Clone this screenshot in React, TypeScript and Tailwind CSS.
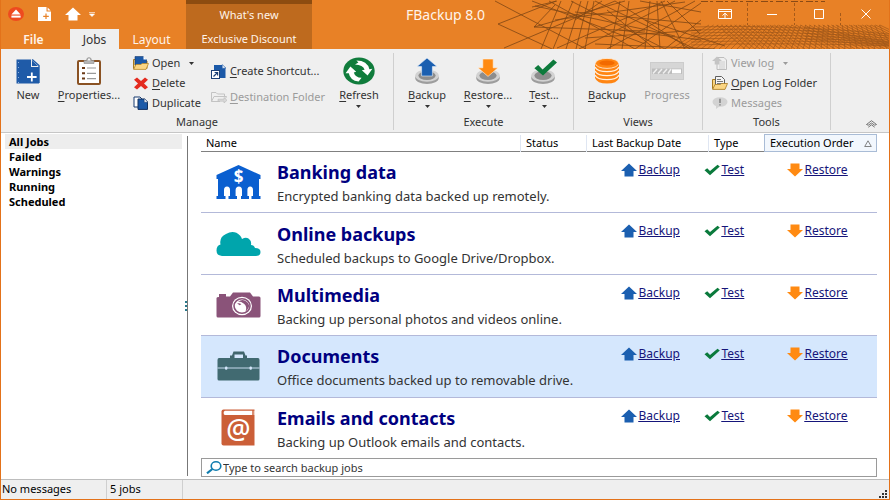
import type { ReactNode } from "react"

type IconProps = { className?: string }

/* ---------- small icons ---------- */

function EjectIcon() {
  return (
    <svg viewBox="0 0 16 14" className="h-3.5 w-4">
      <ellipse cx="8" cy="7" rx="8" ry="7" fill="#ee4a1f" />
      <path d="M8 2.5 12.6 7.4H3.4Z" fill="#fff" />
      <rect x="3.4" y="8.6" width="9.2" height="2" fill="#fff" />
    </svg>
  )
}

function NewFileSmallIcon() {
  return (
    <svg viewBox="0 0 13 14" className="h-3.5 w-[13px]">
      <path d="M0 0H8.5V4.5H13V14H0Z" fill="#fff" />
      <path d="M9.6 0.4 12.6 3.4H9.6Z" fill="#fff" />
      <path d="M8 6.5V12M5.2 9.3H10.8" stroke="#e88126" strokeWidth="1.2" />
    </svg>
  )
}

function UpArrowIcon({ className }: IconProps) {
  return (
    <svg viewBox="0 0 16 14" className={className}>
      <path d="M8 0.5 16 8H12.5V13.5H3.5V8H0Z" fill="currentColor" />
    </svg>
  )
}

function DownArrowIcon({ className }: IconProps) {
  return (
    <svg viewBox="0 0 16 14" className={className}>
      <path d="M8 13.5 16 6H12.5V0.5H3.5V6H0Z" fill="currentColor" />
    </svg>
  )
}

function CheckIcon({ className }: IconProps) {
  return (
    <svg viewBox="0 0 16 12" className={className}>
      <path d="M0.5 6.2 3.2 4.2 6 7 13.5 0.8 15.8 2.6 6 11.2Z" fill="#0a7a3c" />
    </svg>
  )
}

function Caret({ className }: IconProps) {
  return (
    <svg viewBox="0 0 5 3" className={`h-[3px] w-[5px] ${className ?? ""}`}>
      <path d="M0 0H5L2.5 3Z" fill="currentColor" />
    </svg>
  )
}

function OpenIcon() {
  return (
    <svg viewBox="0 0 16 14" className="h-3.5 w-4">
      <path d="M0.5 12.5V3.5H4L5 5H14V12.5Z" fill="#f7d483" stroke="#a87a1f" />
      <path d="M2 0.5H10.5L13.5 3.5V9H2Z" fill="#1b59a8" stroke="#173a70" strokeWidth="0.6" />
      <path d="M10.5 0V3.5H14Z" fill="#fff" />
      <path d="M0.6 13.4 3 8.5H8L9 7.5H15.5L13 13.4Z" fill="#fbd684" stroke="#b98a2b" strokeWidth="0.8" />
    </svg>
  )
}

function DeleteIcon() {
  return (
    <svg viewBox="0 0 16 13" className="h-[13px] w-4">
      <path d="M4 0.5 8 4 12 0.5 15 2.8 11 6.4 15 10.2 12 12.5 8 9 4 12.5 1 10.2 5 6.4 1 2.8Z" fill="#e42b1f" />
    </svg>
  )
}

function DuplicateIcon() {
  return (
    <svg viewBox="0 0 16 14" className="h-3.5 w-4">
      <path d="M1 1H7L9 3V11H1Z" fill="#fff" stroke="#173a70" />
      <path d="M5 3H11.5L14.5 6V13.4H5Z" fill="#1b59a8" stroke="#12305e" />
      <path d="M11.2 2.5V6.2H15Z" fill="#fff" stroke="#12305e" strokeWidth="0.5" />
    </svg>
  )
}

function ShortcutIcon() {
  return (
    <svg viewBox="0 0 16 15" className="h-[15px] w-4">
      <path d="M3 1H11.5L14.5 4V14H3Z" fill="#1b59a8" />
      <path d="M11.2 0.6V4.2H15Z" fill="#fff" stroke="#1b59a8" strokeWidth="0.6" />
      <rect x="0.5" y="6.5" width="8" height="8" fill="#fff" stroke="#1c3f75" />
      <path d="M2.5 12.5 6.3 8.8M3.6 8.5H6.6V11.5" fill="none" stroke="#1c3f75" strokeWidth="1.2" />
    </svg>
  )
}

function DestinationIcon() {
  return (
    <svg viewBox="0 0 16 12" className="h-3 w-4">
      <path d="M0.5 10.5V1.5H5L6.5 3H13.5V5M0.5 10.5 3 5.5H15.5L14.6 7.5M0.5 10.5H9" fill="none" stroke="#c3c3c3" />
      <path d="M7 8.2H13V6.5L16 9.3 13 12V10.2H7Z" fill="#d9d9d9" stroke="#b9b9b9" strokeWidth="0.6" />
    </svg>
  )
}

function ViewLogIcon() {
  return (
    <svg viewBox="0 0 16 14" className="h-3.5 w-4">
      <path d="M5 1.5H12L14.5 4V13.5H5Z" fill="#efefef" stroke="#bdbdbd" />
      <path d="M7 6H13M7 8H13M7 10H13M7 12H13" stroke="#c6c6c6" strokeWidth="0.8" />
      <path d="M5 0.5 10 5H7.3V8.5H2.7V5H0Z" fill="#c4c4c4" />
    </svg>
  )
}

function LogFolderIcon() {
  return (
    <svg viewBox="0 0 16 14" className="h-3.5 w-4">
      <path d="M0.5 12.5V3.5H4V12.5Z" fill="#f7d483" stroke="#a87a1f" />
      <path d="M3.5 0.5H9.5L12.5 3.5V11H3.5Z" fill="#f5f5f5" stroke="#5e5e5e" />
      <path d="M5 3.5H9M5 5.5H11M5 7.5H11" stroke="#6a6a6a" strokeWidth="0.9" />
      <path d="M0.6 13.4 3 8.5H8.5L9.5 7.5H15.5L13 13.4Z" fill="#fbd684" stroke="#a87a1f" strokeWidth="0.8" />
    </svg>
  )
}

function MessagesIcon() {
  return (
    <svg viewBox="0 0 16 12" className="h-3 w-4">
      <ellipse cx="8" cy="5" rx="7.5" ry="4.8" fill="#d3d3d3" />
      <path d="M4 8.5V12L8 9Z" fill="#d3d3d3" />
      <path d="M8 1.8V6M8 7.2V8.6" stroke="#8b8b8b" strokeWidth="1.7" />
    </svg>
  )
}

/* ---------- large ribbon icons ---------- */

function NewIcon() {
  return (
    <svg viewBox="0 0 24 25" className="h-[25px] w-6">
      <path d="M0.5 0.5H15V8H23V24.5H0.5Z" fill="#1f5ba8" />
      <path d="M16.2 0.5 23 6.6V24" fill="none" stroke="#1f5ba8" strokeWidth="1.4" />
      <path d="M16 1.5V7H22Z" fill="#1f5ba8" />
      <path d="M15.8 13.5V22.5M11 18H20.6" stroke="#fff" strokeWidth="1.8" />
      <path d="M2.5 3V24" stroke="#8fb0da" strokeWidth="1" strokeDasharray="1 4" />
    </svg>
  )
}

function PropertiesIcon() {
  return (
    <svg viewBox="0 0 24 28" className="h-7 w-6">
      <rect x="1" y="4" width="22" height="23" rx="1" fill="#fff" stroke="#8a5223" strokeWidth="2" />
      <path d="M7 3.5H9.5Q9.5 0.6 12 0.6T14.5 3.5H17V6.5H7Z" fill="#b5b5b5" stroke="#8d8d8d" strokeWidth="0.6" />
      <circle cx="12" cy="2.6" r="1" fill="#fff" />
      <path d="M5 11H8M5 16.3H8M5 21.6H8" stroke="#6b3a17" strokeWidth="2" />
      <path d="M10 11H19M10 16.3H19M10 21.6H19" stroke="#9a9a9a" strokeWidth="1.2" />
    </svg>
  )
}

function RefreshIcon() {
  return (
    <svg viewBox="0 0 32 28" className="h-7 w-8">
      <ellipse cx="16" cy="14" rx="15.7" ry="13.6" fill="#107c3c" />
      <path d="M2.6 16.2 7.4 9.6 13.2 14.8 10.8 15.4Q12.2 20.4 18.6 20.8L15.6 24.6Q7 23.4 5.8 16.2Z" fill="#fff" />
      <path d="M13.4 3.4Q24.4 3.6 26.4 12.2L29.4 11.8 24.6 18.4 18.8 13.2 21.6 12.8Q20 8 12 7.6L15.4 5.6Z" fill="#fff" />
    </svg>
  )
}

function Disk() {
  return (
    <>
      <ellipse cx="12" cy="21" rx="11.8" ry="6" fill="#9d9d9d" />
      <ellipse cx="12" cy="18.6" rx="11.8" ry="6.2" fill="#d2d2d2" />
      <ellipse cx="12" cy="18.6" rx="8.6" ry="4.3" fill="#8d8d8d" />
    </>
  )
}

function BackupIcon() {
  return (
    <svg viewBox="0 0 24 28" className="h-7 w-6">
      <Disk />
      <path d="M12 1 22 9.6H17.4V19H6.6V9.6H2Z" fill="#1b5fb0" stroke="#eaf1fa" strokeWidth="0.6" />
    </svg>
  )
}

function RestoreIcon() {
  return (
    <svg viewBox="0 0 24 28" className="h-7 w-6">
      <Disk />
      <path d="M12 19.4 22 10.8H17.2V2H6.8V10.8H2Z" fill="#ff8a12" stroke="#fff4e6" strokeWidth="0.6" />
    </svg>
  )
}

function TestIcon() {
  return (
    <svg viewBox="0 0 26 28" className="h-7 w-[26px]">
      <Disk />
      <path d="M3.4 11.2 7.2 8 11.6 12.4 22.4 2.6 26 5.6 12 18.6Z" fill="#0d7a3c" />
    </svg>
  )
}

function DatabaseIcon() {
  return (
    <svg viewBox="0 0 24 26" className="h-[26px] w-6">
      <path d="M0 5V20Q2 25.6 12 25.6T24 20V5Z" fill="#ff8512" />
      <path d="M0 9Q2 13.6 12 13.6T24 9M0 13Q2 17.6 12 17.6T24 13M0 17Q2 21.6 12 21.6T24 17" fill="none" stroke="#fff0df" strokeWidth="1.2" />
      <ellipse cx="12" cy="5.4" rx="11.6" ry="5" fill="#ff8512" stroke="#fff0df" strokeWidth="0.8" />
      <ellipse cx="12" cy="5" rx="7.6" ry="2.6" fill="#f26a00" />
    </svg>
  )
}

function ProgressIcon() {
  return (
    <svg viewBox="0 0 34 18" className="h-[18px] w-[34px]">
      <rect x="0.5" y="0.5" width="33" height="17" fill="#d6d6d6" stroke="#cccccc" />
      <rect x="2" y="6.5" width="30" height="5.5" fill="#bdbdbd" />
      <rect x="22" y="7.3" width="9" height="4" fill="#fff" />
      <path d="M3 11.5 7 7M8 11.5 12 7M13 11.5 17 7M18 11.5 21 7" stroke="#efefef" strokeWidth="1.5" />
    </svg>
  )
}

/* ---------- job icons ---------- */

function BankIcon() {
  return (
    <svg viewBox="0 0 45 34" className="h-[34px] w-[45px]">
      <path
        d="M22.5 0 44.5 10V14H43V31H44.5V34H35.5V31H37V25Q37 21.5 34.2 21.5T31.4 25V31H33V34H25V31H26V25Q26 21.5 22.9 21.5T19.6 25V31H21V34H12.5V31H14V25Q14 21.5 11 21.5T8 25V31H9.5V34H0.5V31H2V14H0.5V10Z"
        fill="#0a5fd0"
      />
      <text x="22.6" y="18" textAnchor="middle" fontFamily="Noto Sans, sans-serif" fontSize="17" fontWeight="700" fill="#fff">$</text>
    </svg>
  )
}

function CloudIcon() {
  return (
    <svg viewBox="0 0 45 24" className="h-6 w-[45px]">
      <path d="M6 24Q0.5 23.5 0.5 18.5T4.5 12.6Q3 5 10 2 18-2.5 24 3.5 25.5 5 26 7 31 4 34 8 35.6 10 35 13 38 13 39 16 44.5 16 44.5 20T40 24Z" fill="#00a5ac" />
    </svg>
  )
}

function CameraIcon() {
  return (
    <svg viewBox="0 0 45 26" className="h-[26px] w-[45px]">
      <path d="M3 5V2H10V4.5H14L17 0.5H34L37 4.5H43Q44.5 4.5 44.5 6V24Q44.5 25.5 43 25.5H2Q0.5 25.5 0.5 24V6Q0.5 5 3 5Z" fill="#8a5379" />
      <ellipse cx="26" cy="14" rx="10" ry="9.2" fill="#fff" />
      <ellipse cx="26" cy="14" rx="8" ry="7.2" fill="none" stroke="#8a5379" strokeWidth="1.6" />
      <path d="M22 9.6Q27 6.4 31 10T31.4 17.6Q30.6 19 29.6 19.6 31.4 14.6 28 11.8 25.4 9.6 22 9.6Z" fill="#8a5379" />
      <path d="M21 11.4Q23.6 10.6 25.4 12.2L23.6 13.2Q22.4 11.8 21 11.4Z" fill="#8a5379" />
    </svg>
  )
}

function BriefcaseIcon() {
  return (
    <svg viewBox="0 0 43 30" className="h-[30px] w-[43px]">
      <path d="M13 7V4.5H15L16.5 0.5H27L28.5 4.5H30V7H26V3.5H17.5V7Z" fill="#41666d" />
      <path d="M2 7H41Q42.5 7 42.5 9V28Q42.5 29.5 41 29.5H2Q0.5 29.5 0.5 28V9Q0.5 7 2 7Z" fill="#416a71" />
      <path d="M0.5 17H42.5" stroke="#d5e7fb" strokeWidth="0.9" />
      <rect x="8" y="15.5" width="2.4" height="3.2" rx="1" fill="#d5e7fb" />
      <rect x="32.5" y="15.5" width="2.4" height="3.2" rx="1" fill="#d5e7fb" />
    </svg>
  )
}

function ContactsIcon() {
  return (
    <svg viewBox="0 0 34 37" className="h-[37px] w-[34px]">
      <path d="M2.5 0.5H33.5V36.5H2.5Q0.5 36.5 0.5 34.5V2.5Q0.5 0.5 2.5 0.5Z" fill="#cb5f38" />
      <path d="M4 1.8H33.5V6H4Q2.6 6 2.6 4T4 1.8Z" fill="#fff" />
      <path d="M32 1V7" stroke="#cb5f38" strokeWidth="1.4" />
      <text x="17.5" y="29.6" textAnchor="middle" fontFamily="Noto Sans, sans-serif" fontSize="27" fontWeight="500" fill="#fff">@</text>
    </svg>
  )
}

/* ---------- title bar pattern ---------- */

const webLines = [
  "0,1 91,49", "3,24 61,1", "3,24 57,49", "9,48 120,1", "37,7 62,1", "37,1 150,44", "40,6 180,36",
  "39,27 130,1", "39,27 60,5", "39,27 150,31", "66,1 46,49", "78,1 58,49", "86,1 71,49", "93,1 81,49",
  "99,1 90,49", "107,1 80,20", "54,1 140,49", "76,1 170,49", "100,1 200,49", "60,20 190,2", "62,48 170,1",
  "84,49 180,1", "112,49 200,1", "125,1 115,49", "134,1 127,49", "140,49 206,3", "80,12 206,24",
  "112,10 160,49", "120,1 195,49", "150,49 155,1", "162,1 165,49", "166,1 190,49", "172,1 205,34",
  "90,38 206,30", "100,44 220,49", "170,49 206,20", "145,1 206,12", "150,20 230,46", "124,30 206,40",
]

function WebPattern() {
  // mesh under the window buttons gets tighter towards the right edge
  const fans = Array.from({ length: 38 }, (_, i) => i)
  return (
    <svg viewBox="0 0 394 49" className="pointer-events-none absolute top-0 right-0 h-[49px] w-[394px]" aria-hidden="true">
      <g fill="none" stroke="#6d3c12" strokeWidth="0.8" opacity="0.85">
        {webLines.map((points) => (
          <polyline key={points} points={points} />
        ))}
      </g>
      <g fill="none" stroke="#8a4a15" strokeWidth="0.7" opacity="0.75">
        {fans.map((i) => (
          <path key={`a${i}`} d={`M${176 + i * 6} 49 L${214 + i * 4.6} 25`} />
        ))}
        {fans.map((i) => (
          <path key={`b${i}`} d={`M${250 + i * 5} 49 L${222 + i * 4.4} 25`} />
        ))}
        {[0, 1, 2, 3, 4, 5, 6].map((i) => (
          <path key={`c${i}`} d={`M196 ${27 + i * 3} Q290 ${24 + i * 3} 394 ${34 + i * 2}`} />
        ))}
        {[0, 1, 2, 3, 4].map((i) => (
          <path key={`d${i}`} d={`M310 ${27 + i * 3} L394 ${42 + i}`} />
        ))}
      </g>
      <path d="M206 1.5H330" stroke="#8a4a15" strokeWidth="1" strokeDasharray="7 2 3 3" />
      <path d="M252.5 3V25M299.5 3V25M345.5 13V25" stroke="#8a4a15" strokeWidth="1" strokeDasharray="3 2" opacity="0.7" />
    </svg>
  )
}

/* ---------- ribbon pieces ---------- */

function Label({ text, hot }: { text: string; hot?: boolean }) {
  if (!hot) return <span>{text}</span>
  return (
    <span>
      <span className="underline underline-offset-2">{text[0]}</span>
      {text.slice(1)}
    </span>
  )
}

type BigButtonProps = { icon: ReactNode; text: string; hot?: boolean; menu?: boolean; disabled?: boolean; className: string }

function BigButton({ icon, text, hot, menu, disabled, className }: BigButtonProps) {
  return (
    <button disabled={disabled} className={`flex flex-col items-center pt-1 text-[#333] disabled:text-[#9b9b9b] ${className}`}>
      <span className="flex h-7 items-center">{icon}</span>
      <span className="mt-0.5 h-4 leading-4 whitespace-nowrap">
        <Label text={text} hot={hot} />
      </span>
      {menu && <Caret className="mt-0.5" />}
    </button>
  )
}

type SmallButtonProps = { icon: ReactNode; text: string; hot?: boolean; menu?: boolean; disabled?: boolean }

function SmallButton({ icon, text, hot, menu, disabled }: SmallButtonProps) {
  return (
    <button disabled={disabled} className="flex h-5 items-center gap-[3px] whitespace-nowrap text-[#333] disabled:text-[#9b9b9b]">
      {icon}
      <Label text={text} hot={hot} />
      {menu && <Caret className="ml-1.5" />}
    </button>
  )
}

function Group({ title, className, children }: { title: string; className: string; children: ReactNode }) {
  return (
    <section aria-label={title} className={`mt-1 mb-0.5 flex flex-col border-r border-[#cfcfcf] ${className}`}>
      <div className="flex flex-1">{children}</div>
      <h2 className="h-[17px] text-center leading-[18px] text-[#333]">{title}</h2>
    </section>
  )
}

const filters = ["All Jobs", "Failed", "Warnings", "Running", "Scheduled"]

const jobs = [
  { title: "Banking data", note: "Encrypted banking data backed up remotely.", icon: <BankIcon /> },
  { title: "Online backups", note: "Scheduled backups to Google Drive/Dropbox.", icon: <CloudIcon /> },
  { title: "Multimedia", note: "Backing up personal photos and videos online.", icon: <CameraIcon /> },
  { title: "Documents", note: "Office documents backed up to removable drive.", icon: <BriefcaseIcon />, selected: true },
  { title: "Emails and contacts", note: "Backing up Outlook emails and contacts.", icon: <ContactsIcon /> },
]

export default function App() {
  return (
    <div className="flex h-screen flex-col border border-t-0 border-[#e3721a] bg-white font-['Noto_Sans','Open_Sans',sans-serif] text-[11px] text-black">
      <header className="relative flex h-[49px] shrink-0 bg-[#e88126] text-[#fff4ea]">
        <WebPattern />
        <div className="flex w-[185px] flex-col justify-between">
          <div className="flex h-7 items-center gap-3.5 pl-[7px]">
            <button aria-label="FBackup"><EjectIcon /></button>
            <button aria-label="New backup"><NewFileSmallIcon /></button>
            <div className="flex items-center gap-2">
              <button aria-label="Backup"><UpArrowIcon className="h-3.5 w-4 text-white" /></button>
              <button aria-label="Customize toolbar">
                <svg viewBox="0 0 6 5" className="h-[5px] w-1.5">
                  <path d="M0 0.5H6M0.5 2H5.5L3 4.6Z" fill="#fff" stroke="#fff" strokeWidth="0.6" />
                </svg>
              </button>
            </div>
          </div>
          <nav className="flex h-5 text-xs leading-[22px]">
            <button className="w-[69px] pr-1 font-semibold">File</button>
            <button className="w-[49px] bg-[#efefef] text-[#333]">Jobs</button>
            <button className="w-[65px]">Layout</button>
          </nav>
        </div>
        <div className="flex w-[126px] flex-col justify-between border-t-4 border-[#8d4c10] bg-[#be6a1e]">
          <span className="text-center leading-[22px]">What&apos;s new</span>
          <button className="h-5 leading-5">Exclusive Discount</button>
        </div>
        <h1 className="flex-1 pl-[94px] text-sm leading-[30px]">FBackup 8.0</h1>
        <div className="relative flex h-[25px] items-center pt-0.5">
          <button aria-label="Ribbon options" className="flex h-full w-[47px] items-center justify-center">
            <svg viewBox="0 0 14 10" className="h-2.5 w-3.5" fill="none" stroke="#fff">
              <path d="M0.5 0.5H13.5V9.5H0.5ZM0.5 2.5H13.5M7 9V4.5M4.5 6.5 7 4.2 9.5 6.5" />
            </svg>
          </button>
          <button aria-label="Minimize" className="flex h-full w-[47px] items-center justify-center">
            <svg viewBox="0 0 10 10" className="size-2.5" stroke="#fff"><path d="M0 5.5H10" /></svg>
          </button>
          <button aria-label="Maximize" className="flex h-full w-[47px] items-center justify-center">
            <svg viewBox="0 0 10 10" className="size-2.5" fill="none" stroke="#fff"><path d="M0.5 0.5H9.5V9.5H0.5Z" /></svg>
          </button>
          <button aria-label="Close" className="flex h-full w-[47px] items-center justify-center">
            <svg viewBox="0 0 10 10" className="size-2.5" stroke="#fff"><path d="M0.5 0.5 9.5 9.5M9.5 0.5 0.5 9.5" /></svg>
          </button>
        </div>
      </header>

      <div className="flex h-[84px] shrink-0 border-b border-[#c6c6c6] bg-[#efefef]">
        <Group title="Manage" className="w-[393px]">
          <BigButton icon={<NewIcon />} text="New" className="w-[54px]" />
          <BigButton icon={<PropertiesIcon />} text="Properties..." hot className="w-[68px]" />
          <div className="flex flex-col pl-2.5">
            <SmallButton icon={<OpenIcon />} text="Open" menu />
            <SmallButton icon={<DeleteIcon />} text="Delete" hot />
            <SmallButton icon={<DuplicateIcon />} text="Duplicate" />
          </div>
          <div className="flex flex-col gap-1.5 pt-2 pl-2.5">
            <SmallButton icon={<ShortcutIcon />} text="Create Shortcut..." hot />
            <SmallButton icon={<DestinationIcon />} text="Destination Folder" hot disabled />
          </div>
          <BigButton icon={<RefreshIcon />} text="Refresh" hot menu className="w-[68px]" />
        </Group>
        <Group title="Execute" className="w-[180px]">
          <BigButton icon={<BackupIcon />} text="Backup" hot menu className="w-[66px]" />
          <BigButton icon={<RestoreIcon />} text="Restore..." hot menu className="w-14" />
          <BigButton icon={<TestIcon />} text="Test..." hot menu className="w-14" />
        </Group>
        <Group title="Views" className="w-[129px]">
          <BigButton icon={<DatabaseIcon />} text="Backup" hot className="w-[66px]" />
          <BigButton icon={<ProgressIcon />} text="Progress" disabled className="w-[54px]" />
        </Group>
        <Group title="Tools" className="w-32">
          <div className="flex flex-col pl-[9px]">
            <SmallButton icon={<ViewLogIcon />} text="View log" menu disabled />
            <SmallButton icon={<LogFolderIcon />} text="Open Log Folder" hot />
            <SmallButton icon={<MessagesIcon />} text="Messages" disabled />
          </div>
        </Group>
        <button aria-label="Collapse ribbon" className="mr-3 mb-1 ml-auto self-end">
          <svg viewBox="0 0 11 8" className="h-2 w-[11px]" fill="none" stroke="#555">
            <path d="M0.5 4.5 5.5 0.7 10.5 4.5 8.7 5.2 5.5 3 2.3 5.2ZM2.3 7.2 5.5 4.8 8.7 7.2" strokeWidth="0.8" />
          </svg>
        </button>
      </div>

      <main className="flex min-h-0 flex-1">
        <ul className="w-[181px] pt-px pl-1 font-bold">
          {filters.map((name, i) => (
            <li key={name}>
              <button className={`block h-[15px] w-full pl-1 text-left leading-[15px] ${i === 0 ? "bg-[#ededed]" : ""}`}>{name}</button>
            </li>
          ))}
        </ul>
        <div className="my-[3px] flex w-[6px] items-center justify-end border-r border-[#777]">
          <span className="h-2.5 w-0.5 border-l-2 border-dotted border-[#2a7a8c]" />
        </div>

        <div className="flex min-w-0 flex-1 flex-col pt-px pr-3 pb-0.5 pl-[13px]">
          <div className="min-h-0 flex-1">
            <table className="h-full w-full table-fixed border-collapse">
              <colgroup>
                <col />
                <col className="w-[66px]" />
                <col className="w-[122px]" />
                <col className="w-[56px]" />
                <col className="w-[112px]" />
              </colgroup>
              <thead>
                <tr className="h-[17px] border-b border-[#808080] text-left whitespace-nowrap [&>th]:p-0 [&>th]:pl-[5px] [&>th]:leading-4 [&>th]:font-normal">
                  <th>Name</th>
                  <th className="border-l border-[#dfe6f2]">Status</th>
                  <th className="border-l border-[#dfe6f2]">Last Backup Date</th>
                  <th className="border-l border-[#dfe6f2]">Type</th>
                  <th className="border border-[#a9bcd6] bg-[#f2f7fd]">
                    <span className="flex items-center justify-between pr-1">
                      Execution Order
                      <svg viewBox="0 0 8 7" className="h-[7px] w-2" fill="none" stroke="#666"><path d="M4 0.8 7.3 6.5H0.7Z" strokeWidth="0.8" /></svg>
                    </span>
                  </th>
                </tr>
              </thead>
              <tbody>
                {jobs.map((job) => (
                  <tr key={job.title} className={`border-b border-[#b3b9d9] last:border-b-0 ${job.selected ? "bg-[#d5e7fd]" : ""}`}>
                    <td colSpan={2} className="p-0">
                      <div className="flex items-center">
                        <span className="flex w-[74px] shrink-0 justify-center">{job.icon}</span>
                        <div className="pt-0.5 pl-0.5 whitespace-nowrap">
                          <h3 className="text-lg leading-6 font-bold text-[#000080]">{job.title}</h3>
                          <p className="pt-0.5 text-[13px] leading-5 text-[#333]">{job.note}</p>
                        </div>
                      </div>
                    </td>
                    <td colSpan={3} className="p-0 pt-2.5 pl-[34px] align-top">
                      <div className="flex items-center text-xs leading-4 text-[#15157a] underline">
                        <a href="#backup" className="flex w-[83px] items-center gap-0.5"><UpArrowIcon className="h-3.5 w-4 text-[#1b5fb0]" />Backup</a>
                        <a href="#test" className="flex w-[83px] items-center gap-0.5"><CheckIcon className="h-3 w-4" />Test</a>
                        <a href="#restore" className="flex items-center gap-0.5"><DownArrowIcon className="h-3.5 w-4 text-[#ff8a12]" />Restore</a>
                      </div>
                    </td>
                  </tr>
                ))}
              </tbody>
            </table>
          </div>
          <div className="flex h-[19px] shrink-0 items-center border border-[#9a9a9a] pl-1">
            <label htmlFor="job-search" aria-label="Search backup jobs">
              <svg viewBox="0 0 16 13" className="h-[13px] w-4" fill="none" stroke="#0f7cae">
                <ellipse cx="10" cy="5" rx="4.8" ry="4.2" strokeWidth="1.6" />
                <path d="M6.4 8 1 12.3" strokeWidth="2.2" />
              </svg>
            </label>
            <input
              id="job-search"
              type="text"
              aria-label="Search backup jobs"
              placeholder="Type to search backup jobs"
              className="h-full min-w-0 flex-1 pl-px leading-[17px] outline-none placeholder:text-[#333]"
            />
          </div>
        </div>
      </main>

      <footer className="flex h-5 shrink-0 border-t border-[#bdbdbd] bg-[#efefef] leading-[18px]">
        <span className="w-[106px] border-r border-[#cfcfcf] pl-px">No messages</span>
        <span className="w-[76px] border-r border-[#cfcfcf] pl-[3px]">5 jobs</span>
        <svg viewBox="0 0 8 8" className="mt-auto mr-0.5 mb-px ml-auto size-2" fill="#333">
          <path d="M6 0H8V2H6ZM3 3H5V5H3ZM6 3H8V5H6ZM0 6H2V8H0ZM3 6H5V8H3ZM6 6H8V8H6Z" />
        </svg>
      </footer>
    </div>
  )
}
